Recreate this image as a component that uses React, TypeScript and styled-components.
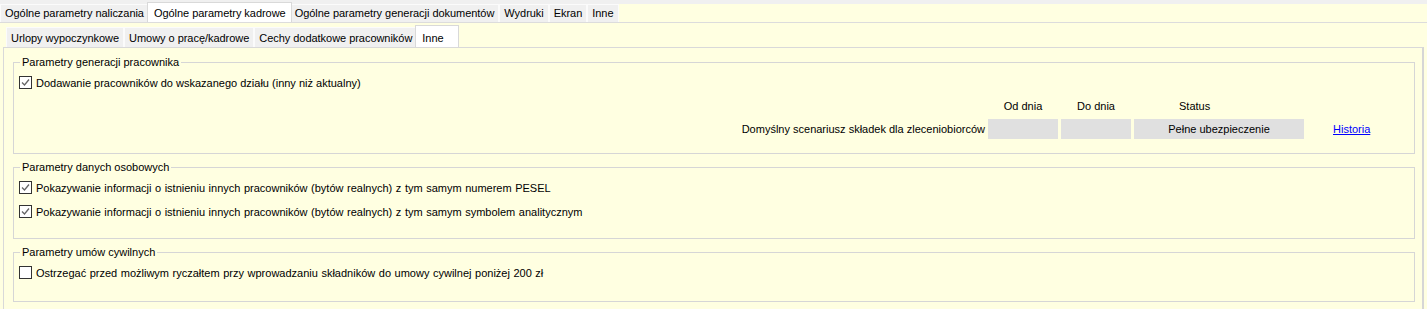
import React from "react";
import styled, { createGlobalStyle } from "styled-components";

const GlobalStyle = createGlobalStyle`
  html, body {
    margin: 0;
    padding: 0;
    background: #ffffe1;
  }
  body {
    font-family: "Liberation Sans", Arial, sans-serif;
    font-size: 11px;
    color: #000;
  }
`;

const Window = styled.div`
  width: 1427px;
  height: 309px;
  overflow: hidden;
  background: #ffffe1;
  display: flex;
  flex-direction: column;
`;

const MainTabs = styled.div`
  display: flex;
  align-items: flex-end;
  height: 22px;
  background: linear-gradient(#f0f0f0 0 4px, #ffffe1 4px);
  border-bottom: 1px solid #dcdcdc;
`;

const SubTabs = styled.div`
  display: flex;
  align-items: flex-end;
  height: 24px;
  padding-left: 6px;
`;

const Tab = styled.div<{ $active?: boolean; $tall: number; $min?: number }>`
  position: relative;
  z-index: ${(p) => (p.$active ? 1 : 0)};
  display: flex;
  align-items: flex-end;
  box-sizing: border-box;
  min-width: ${(p) => p.$min ?? 0}px;
  height: ${(p) => (p.$active ? p.$tall + 2 : p.$tall)}px;
  margin: 0 ${(p) => (p.$active ? -2 : 0)}px;
  padding: 0 ${(p) => (p.$active ? 5 : 4)}px 2px ${(p) => (p.$active ? 6 : 4)}px;
  line-height: 14px;
  letter-spacing: -0.04px;
  white-space: nowrap;
  background: ${(p) => (p.$active ? "#ffffff" : "#f0f0f0")};
  border: 1px solid ${(p) => (p.$active ? "#d9d9d9" : "#fbfbfb")};
  border-bottom: none;
`;

const Panel = styled.div`
  flex: 1;
  margin: 0 3px;
  padding: 8px 7px 0 9px;
  border: 1px solid #d9d9d9;
  border-right: 2px solid #d6d6d6;
  border-bottom: none;
  display: flex;
  flex-direction: column;
  gap: 7px;
`;

const Group = styled.fieldset<{ $bottom: number }>`
  margin: 0;
  min-width: 0;
  padding: 6px 5px ${(p) => p.$bottom}px 5px;
  border: 1px solid #d6d6d6;
`;

const Legend = styled.legend`
  margin-left: 1px;
  padding: 0 2px;
  line-height: 13px;
`;

const Rows = styled.div`
  display: flex;
  flex-direction: column;
  gap: 9px;
`;

const CheckRow = styled.label<{ $spaced?: boolean }>`
  display: flex;
  align-items: center;
  gap: 4px;
  height: 15px;
  white-space: nowrap;
  word-spacing: ${(p) => (p.$spaced ? 0.5 : 0)}px;
`;

const Box = styled.span`
  display: inline-flex;
  align-items: center;
  justify-content: center;
  box-sizing: border-box;
  width: 13px;
  height: 13px;
  flex: none;
  background: #fff;
  border: 1px solid #333;
`;

const ScenarioGrid = styled.div`
  display: grid;
  grid-template-columns: 1fr 70px 70px 170px 102px;
  column-gap: 3px;
  row-gap: 6px;
  margin-top: 10px;
  align-items: center;
`;

const Head = styled.div<{ $pad?: number }>`
  line-height: 13px;
  text-align: ${(p) => (p.$pad ? "left" : "center")};
  padding-left: ${(p) => p.$pad ?? 0}px;
`;

const RowLabel = styled.div`
  text-align: right;
  white-space: nowrap;
`;

const Field = styled.div`
  height: 20px;
  line-height: 20px;
  background: #e0e0e0;
  text-align: center;
`;

const Link = styled.a`
  padding-left: 26px;
  color: #0000ff;
  text-decoration: underline;
  cursor: pointer;
`;

function Checkbox({ checked, label, spaced }: { checked?: boolean; label: string; spaced?: boolean }) {
  return (
    <CheckRow $spaced={spaced}>
      <Box>
        {checked && (
          <svg width="9" height="9" viewBox="0 0 9 9">
            <polyline points="1,4.5 3.5,7 8,1.5" fill="none" stroke="#666" strokeWidth="1.3" />
          </svg>
        )}
      </Box>
      <span>{label}</span>
    </CheckRow>
  );
}

const mainTabs = [
  "Ogólne parametry naliczania",
  "Ogólne parametry kadrowe",
  "Ogólne parametry generacji dokumentów",
  "Wydruki",
  "Ekran",
  "Inne",
];

const subTabs = ["Urlopy wypoczynkowe", "Umowy o pracę/kadrowe", "Cechy dodatkowe pracowników", "Inne"];

export default function App() {
  return (
    <Window>
      <GlobalStyle />
      <MainTabs>
        {mainTabs.map((t, i) => (
          <Tab key={t} $tall={18} $active={i === 1}>
            {t}
          </Tab>
        ))}
      </MainTabs>
      <SubTabs>
        {subTabs.map((t, i) => (
          <Tab key={t} $tall={20} $active={i === 3} $min={i === 3 ? 44 : 0}>
            {t}
          </Tab>
        ))}
      </SubTabs>
      <Panel>
        <Group $bottom={14}>
          <Legend>Parametry generacji pracownika</Legend>
          <Checkbox checked label="Dodawanie pracowników do wskazanego działu (inny niż aktualny)" />
          <ScenarioGrid>
            <div />
            <Head>Od dnia</Head>
            <Head>Do dnia</Head>
            <Head $pad={45}>Status</Head>
            <div />
            <RowLabel>Domyślny scenariusz składek dla zleceniobiorców</RowLabel>
            <Field />
            <Field />
            <Field>Pełne ubezpieczenie</Field>
            <Link>Historia</Link>
          </ScenarioGrid>
        </Group>
        <Group $bottom={19}>
          <Legend>Parametry danych osobowych</Legend>
          <Rows>
            <Checkbox
              checked
              spaced
              label="Pokazywanie informacji o istnieniu innych pracowników (bytów realnych) z tym samym numerem PESEL"
            />
            <Checkbox
              checked
              spaced
              label="Pokazywanie informacji o istnieniu innych pracowników (bytów realnych) z tym samym symbolem analitycznym"
            />
          </Rows>
        </Group>
        <Group $bottom={21}>
          <Legend>Parametry umów cywilnych</Legend>
          <Checkbox
            spaced
            label="Ostrzegać przed możliwym ryczałtem przy wprowadzaniu składników do umowy cywilnej poniżej 200 zł"
          />
        </Group>
      </Panel>
    </Window>
  );
}
